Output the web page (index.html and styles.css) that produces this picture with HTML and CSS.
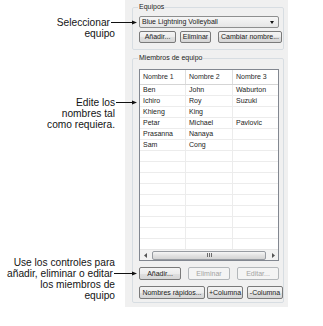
FILE: index.html
```html
<!DOCTYPE html>
<html lang="es">
<head>
<meta charset="utf-8">
<title>Equipos</title>
<link rel="stylesheet" href="styles.css">
</head>
<body>
<div class="page">
  <div class="notes">
    <div class="note note-1">
      <div class="line arrowed"><span>Seleccionar</span><svg class="arrow" width="27" height="11" viewBox="0 0 27 11"><line x1="1" y1="5.5" x2="23" y2="5.5" stroke="#111" stroke-width="1"/><path d="M27 5.5 L22 3.5 L22 7.5 Z" fill="#111"/></svg></div>
      <div class="line">equipo</div>
    </div>
    <div class="note note-2">
      <div class="line arrowed"><span>Edite los</span><svg class="arrow" width="22" height="11" viewBox="0 0 22 11"><line x1="1" y1="5.5" x2="18" y2="5.5" stroke="#111" stroke-width="1"/><path d="M22 5.5 L17 3.5 L17 7.5 Z" fill="#111"/></svg></div>
      <div class="line">nombres tal</div>
      <div class="line">como requiera.</div>
    </div>
    <div class="note note-3">
      <div class="line">Use los controles para</div>
      <div class="line arrowed"><span>añadir, eliminar o editar</span><svg class="arrow" width="24" height="11" viewBox="0 0 24 11"><line x1="1" y1="5.5" x2="20" y2="5.5" stroke="#111" stroke-width="1"/><path d="M24 5.5 L19 3.5 L19 7.5 Z" fill="#111"/></svg></div>
      <div class="line">los miembros de</div>
      <div class="line">equipo</div>
    </div>
  </div>

  <div class="panel">
    <fieldset class="group group-teams">
      <legend>Equipos</legend>
      <div class="select"><span>Blue Lightning Volleyball</span><span class="caret"></span></div>
      <div class="btn-row top-row">
        <button class="btn w-add">Añadir...</button>
        <button class="btn w-del">Eliminar</button>
        <button class="btn w-ren">Cambiar nombre...</button>
      </div>
    </fieldset>

    <fieldset class="group group-members">
      <legend>Miembros de equipo</legend>
      <div class="grid">
        <div class="grid-head">
          <div class="cell">Nombre 1</div>
          <div class="cell">Nombre 2</div>
          <div class="cell">Nombre 3</div>
        </div>
        <div class="grid-body">
          <div class="row"><div class="cell">Ben</div><div class="cell">John</div><div class="cell">Waburton</div></div>
          <div class="row"><div class="cell">Ichiro</div><div class="cell">Roy</div><div class="cell">Suzuki</div></div>
          <div class="row"><div class="cell">Khieng</div><div class="cell">King</div><div class="cell"></div></div>
          <div class="row"><div class="cell">Petar</div><div class="cell">Michael</div><div class="cell">Pavlovic</div></div>
          <div class="row"><div class="cell">Prasanna</div><div class="cell">Nanaya</div><div class="cell"></div></div>
          <div class="row"><div class="cell">Sam</div><div class="cell">Cong</div><div class="cell"></div></div>
          <div class="row"><div class="cell"></div><div class="cell"></div><div class="cell"></div></div>
          <div class="row"><div class="cell"></div><div class="cell"></div><div class="cell"></div></div>
          <div class="row"><div class="cell"></div><div class="cell"></div><div class="cell"></div></div>
          <div class="row"><div class="cell"></div><div class="cell"></div><div class="cell"></div></div>
          <div class="row"><div class="cell"></div><div class="cell"></div><div class="cell"></div></div>
          <div class="row"><div class="cell"></div><div class="cell"></div><div class="cell"></div></div>
          <div class="row"><div class="cell"></div><div class="cell"></div><div class="cell"></div></div>
          <div class="row"><div class="cell"></div><div class="cell"></div><div class="cell"></div></div>
          <div class="row"><div class="cell"></div><div class="cell"></div><div class="cell"></div></div>
        </div>
        <div class="hscroll">
          <div class="sb-btn"><svg width="4" height="5" viewBox="0 0 4 5"><path d="M0 2.5 L3 0 L3 5 Z" fill="#555"/></svg></div>
          <div class="sb-thumb"><span class="grip"></span><span class="grip"></span><span class="grip"></span></div>
          <div class="sb-btn"><svg width="4" height="5" viewBox="0 0 4 5"><path d="M4 2.5 L1 0 L1 5 Z" fill="#555"/></svg></div>
        </div>
      </div>
      <div class="btn-row bottom-row-1">
        <button class="btn w-b1">Añadir...</button>
        <button class="btn w-b1" disabled>Eliminar</button>
        <button class="btn w-b1" disabled>Editar...</button>
      </div>
      <div class="btn-row bottom-row-2">
        <button class="btn w-quick">Nombres rápidos...</button>
        <button class="btn w-col">+Columna</button>
        <button class="btn w-col">-Columna</button>
      </div>
    </fieldset>
  </div>
</div>
</body>
</html>
```

FILE: styles.css
```css
* { box-sizing: border-box; }

html, body {
  margin: 0;
  padding: 0;
  background: #ffffff;
}

.page {
  display: flex;
  align-items: flex-start;
  width: 323px;
  height: 326px;
}

/* ---------- callout notes ---------- */
.notes {
  position: relative;
  z-index: 2;
  width: 137px;
  margin-right: -12px;
  display: flex;
  flex-direction: column;
  padding-top: 17px;
  font-family: "Liberation Sans", Arial, sans-serif;
  font-size: 10.2px;
  line-height: 11px;
  color: #141414;
}

.note {
  display: flex;
  flex-direction: column;
  align-items: flex-end;
}

.note-2 { margin-top: 58px; }
.note-3 { margin-top: 127px; }

.line {
  white-space: nowrap;
  padding-right: 22px;
  height: 11px;
}

.line.arrowed {
  display: flex;
  align-items: center;
  padding-right: 0;
}

.arrow { display: block; flex: none; }

/* ---------- panel ---------- */
.panel {
  width: 163px;
  background: #f0f0f0;
  padding: 2px 4px 4px 7px;
  font-family: "Liberation Sans", Arial, sans-serif;
  font-size: 7px;
  color: #1a1a1a;
}

.group {
  margin: 0;
  min-width: 0;
  border: 1px solid #d7dde2;
  border-radius: 2px;
  padding: 0 0 6px 6px;
}

.group legend {
  padding: 0 1px;
  margin-left: -1px;
  font-size: 7px;
  line-height: 10px;
  color: #222;
}

.group-members {
  margin-top: 3px;
  padding-bottom: 3px;
}

.select {
  margin-top: 4px;
  width: 140px;
  height: 12px;
  border: 1px solid #8e8f8f;
  border-radius: 2px;
  background: linear-gradient(#f6f6f6, #e6e6e6);
  display: flex;
  align-items: center;
  justify-content: space-between;
  padding: 0 4px 0 2px;
  line-height: 10px;
}

.caret {
  width: 0;
  height: 0;
  border-left: 2.5px solid transparent;
  border-right: 2.5px solid transparent;
  border-top: 3px solid #111;
}

.btn-row {
  display: flex;
}

.top-row { margin-top: 3px; }
.bottom-row-1 { margin-top: 6px; gap: 7px; }
.bottom-row-2 { margin-top: 6px; }

.btn {
  font-family: "Liberation Sans", Arial, sans-serif;
  font-size: 7px;
  color: #1a1a1a;
  height: 12px;
  padding: 0;
  margin: 0;
  border: 1px solid #7a7a7a;
  border-radius: 2px;
  background: linear-gradient(#f4f4f4, #ececec 50%, #e0e0e0 51%, #d6d6d6);
  line-height: 10px;
  white-space: nowrap;
}

.btn:disabled {
  color: #a3a3a3;
  border-color: #b3b7ba;
  background: #f4f4f4;
}

.w-add { width: 37px; }
.w-del { width: 31px; margin-left: 4px; }
.w-ren { width: 64px; margin-left: 7px; }

.bottom-row-1 .btn, .bottom-row-2 .btn { height: 13px; }
.w-b1 { width: 42px; }
.w-quick { width: 66px; }
.w-col { width: 36px; margin-left: 2px; }
.w-col + .w-col { margin-left: 4px; }

/* ---------- grid ---------- */
.grid {
  margin-top: 6px;
  width: 140px;
  border: 1px solid #828790;
  background: #ffffff;
}

.grid-head, .row {
  display: grid;
  grid-template-columns: 46px 47px 45px;
}

.grid-head {
  height: 15px;
  border-bottom: 1px solid #d5d5d5;
}

.grid-head .cell {
  line-height: 14px;
  border-right: 1px solid #dedede;
  padding-left: 3px;
  color: #2a2a2a;
}

.grid-body {
  height: 164px;
  overflow: hidden;
}

.row {
  height: 11px;
  border-bottom: 1px solid #ececec;
}

.row .cell {
  line-height: 10px;
  padding-left: 3px;
  border-right: 1px solid #ececec;
  white-space: nowrap;
  overflow: hidden;
  color: #222;
}

.grid-head .cell:last-child,
.row .cell:last-child { border-right: none; }

.hscroll {
  height: 11px;
  display: flex;
  align-items: center;
  background: #f2f2f2;
  border-top: 1px solid #e6e6e6;
}

.sb-btn {
  width: 11px;
  height: 10px;
  display: flex;
  align-items: center;
  justify-content: center;
  flex: none;
}

.sb-thumb {
  flex: 1;
  height: 9px;
  margin: 0 1px;
  border: 1px solid #979ba1;
  border-radius: 2px;
  background: linear-gradient(#f5f5f5, #e2e2e2 50%, #d4d4d4);
  display: flex;
  align-items: center;
  justify-content: center;
  gap: 1px;
}

.grip {
  width: 1px;
  height: 4px;
  background: #6b6b6b;
}
```
